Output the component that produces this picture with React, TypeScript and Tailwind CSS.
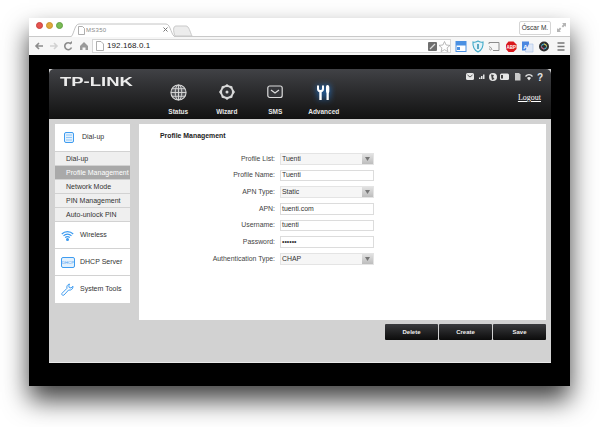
const subItems = ['Dial-up', 'Profile Management', 'Network Mode', 'PIN Management', 'Auto-unlock PIN']

const fields = [
  { label: 'Profile List:', value: 'Tuenti', select: true },
  { label: 'Profile Name:', value: 'Tuenti' },
  { label: 'APN Type:', value: 'Static', select: true },
  { label: 'APN:', value: 'tuenti.com' },
  { label: 'Username:', value: 'tuenti' },
  { label: 'Password:', value: '••••••' },
  { label: 'Authentication Type:', value: 'CHAP', select: true },
]

function TrafficLights() {
  return (
    <div className="flex gap-[3px] pl-[7px] pt-[4px]">
      <span className="h-[7px] w-[7px] rounded-full bg-[#e5544f] border border-[#c9403c]" />
      <span className="h-[7px] w-[7px] rounded-full bg-[#e0a93c] border border-[#c8922c]" />
      <span className="h-[7px] w-[7px] rounded-full bg-[#79bb55] border border-[#62a042]" />
    </div>
  )
}

function Tabstrip() {
  return (
    <div className="relative flex h-[19px] bg-white border-b border-[#c9c9c9]">
      <TrafficLights />
      {/* tab */}
      <svg className="absolute left-[41px] top-[5px]" width="135" height="14" viewBox="0 0 135 14" fill="none">
        <path d="M0 14 C4 14 4 1 9 1 H96 C101 1 101 14 106 14" fill="#fff" stroke="#c4c4c4" />
        <path d="M105 13 C103 8 103 3 106 3 H116 C119 3 120 9 122 13 Z" fill="#ececec" stroke="#c9c9c9" />
      </svg>
      <svg className="absolute left-[49px] top-[8px]" width="7" height="9" viewBox="0 0 7 9" fill="#fff" stroke="#9a9a9a" strokeWidth="0.8">
        <path d="M0.5 0.5H4.5L6.5 2.5V8.5H0.5Z" />
      </svg>
      <span className="absolute left-[57px] top-[8px] text-[6px] leading-[9px] tracking-[0.3px] text-[#8a8a8a]">MS350</span>
      <svg className="absolute left-[134px] top-[9px]" width="5" height="5" viewBox="0 0 5 5" stroke="#777" strokeWidth="1">
        <path d="M0.500 0.500L4.500 4.500M4.500 0.500L0.500 4.500" />
      </svg>
      {/* profile button */}
      <div className="absolute left-[490px] top-[3px] flex h-[14px] w-[32px] items-center justify-center whitespace-nowrap rounded-[2px] border border-[#d5d5d5] bg-white text-[6.5px] text-[#333]">
        Óscar M.
      </div>
      <svg className="absolute left-[528px] top-[5px]" width="9" height="9" viewBox="0 0 9 9" fill="#b5b5b5">
        <path d="M5 0H9V4L7.8 2.8L6 4.4L4.7 3.2L6.3 1.2Z" />
        <path d="M0 9V5L1.2 6.2L3 4.6L4.3 5.8L2.7 7.8L4 9Z" />
      </svg>
    </div>
  )
}

function Toolbar() {
  return (
    <div className="relative flex h-[18px] items-center bg-[#f6f6f6]">
      <svg className="absolute left-[5px] top-[4px]" width="60" height="10" viewBox="0 0 60 10" fill="none" strokeWidth="1.6">
        <path d="M9 5H2M5 2L2 5L5 8" stroke="#8c8c8c" />
        <path d="M16 5H23M20 2L23 5L20 8" stroke="#d2d2d2" />
        <path d="M37 3A3.5 3.5 0 1 0 37.5 6.5" stroke="#8c8c8c" />
        <path d="M35 2.6H38V0Z" fill="#8c8c8c" stroke="none" />
        <path d="M46 5L50 1L54 5V9H51.5V6.5H48.5V9H46Z" fill="#9a9a9a" stroke="none" />
      </svg>
      <div className="absolute left-[63px] top-[2px] flex h-[14px] w-[359px] items-center border border-[#d5d5d5] bg-white pl-[3px]">
        <svg width="8" height="10" viewBox="0 0 8 10" fill="#fff" stroke="#9a9a9a" strokeWidth="0.8">
          <path d="M0.5 0.5H5L7.5 3V9.5H0.5Z" />
        </svg>
        <span className="ml-[3px] text-[8px] font-medium tracking-[0.1px] text-[#222]">192.168.0.1</span>
      </div>
      <svg className="absolute left-[399px] top-[3px]" width="140" height="13" viewBox="0 0 140 13" fill="none">
        {/* pen */}
        <rect x="0" y="2" width="9" height="9" rx="1" fill="#6f6f6f" />
        <path d="M2 9L7 4" stroke="#ddd" strokeWidth="1.2" />
        {/* star */}
        <path d="M16.500 1.500L18.100 5L22 5.400L19.100 7.900L19.900 11.600L16.500 9.700L13.100 11.600L13.900 7.900L11 5.400L14.900 5Z" fill="#fff" stroke="#a8a8a8" strokeWidth="0.8" />
        {/* window ext */}
        <rect x="28" y="1.500" width="10" height="10" fill="#fff" stroke="#4a90e2" />
        <rect x="28" y="1.500" width="10" height="4" fill="#4a90e2" />
        <rect x="29" y="7" width="3" height="3" fill="#4a90e2" />
        {/* shield */}
        <path d="M45 2C47 3 49 1.500 50 1C51 1.500 53 3 55 2C55.500 7 53 10.500 50 12C47 10.500 44.500 7 45 2Z" fill="#e3f3f8" stroke="#3fa9c9" strokeWidth="1.100" />
        <path d="M50 4V9" stroke="#2e8fb0" strokeWidth="1.500" />
        {/* cast */}
        <path d="M61 4V2.500H71V10.500H65" stroke="#8c8c8c" />
        <path d="M61 6.500A4 4 0 0 1 64 10M61 8.700A2 2 0 0 1 62.500 10.500" stroke="#8c8c8c" strokeWidth="0.8" />
        {/* abp */}
        <path d="M80.500 1.500H85.500L88.500 4.500V9L85.500 12H80.500L78 9V4.500Z" fill="#d9171b" />
        <text x="83.300" y="8.500" fontSize="4.500" fontWeight="700" fill="#fff" textAnchor="middle" fontFamily="Liberation Sans">ABP</text>
        {/* translate */}
        <rect x="94" y="1.500" width="7" height="9" fill="#4a86e0" />
        <path d="M101 4H105V12H97.500V10.500" fill="#dfe8f7" stroke="#a9c0e6" strokeWidth="0.6" />
        <text x="97.500" y="8.500" fontSize="6" fontWeight="700" fill="#fff" textAnchor="middle" fontFamily="Liberation Sans">A</text>
        {/* color wheel */}
        <circle cx="116" cy="6.500" r="5" fill="#2f2f2f" />
        <circle cx="116" cy="6.500" r="2.500" fill="none" stroke="#46b5d8" strokeWidth="1" />
        <path d="M116 4A2.500 2.500 0 0 1 118.500 6.500" stroke="#e8c53a" strokeWidth="1" />
        <path d="M116 9A2.500 2.500 0 0 1 113.500 6.500" stroke="#d9486a" strokeWidth="1" />
        {/* menu */}
        <path d="M129.500 3H136.500M129.500 6.500H136.500M129.500 10H136.500" stroke="#777" strokeWidth="1.500" />
      </svg>
    </div>
  )
}

function NavIcon({ name }: { name: string }) {
  if (name === 'Status') {
    return (
      <svg width="17" height="17" viewBox="0 0 18 18" fill="none" stroke="#d8d8d8" strokeWidth="1">
        <circle cx="9" cy="9" r="8" fill="#55575b" strokeWidth="1.200" />
        <ellipse cx="9" cy="9" rx="3.500" ry="8" />
        <path d="M9 1V17M1 9H17M2 5H16M2 13H16" />
      </svg>
    )
  }
  if (name === 'Wizard') {
    return (
      <svg width="18" height="18" viewBox="0 0 18 18" fill="none">
        <path d="M9 1L11 2.600L14.200 3.200L15 6L17 9L15 12L14.200 14.800L11 15.400L9 17L7 15.400L3.800 14.800L3 12L1 9L3 6L3.800 3.200L7 2.600Z" fill="#d8d8d8" />
        <circle cx="9" cy="9" r="5" fill="#333437" />
        <circle cx="9" cy="9" r="1.500" fill="#d8d8d8" />
      </svg>
    )
  }
  if (name === 'SMS') {
    return (
      <svg width="16" height="14" viewBox="0 0 16 14" fill="none" stroke="#dcdcdc" strokeWidth="1.200">
        <rect x="0.800" y="1" width="14.400" height="11.500" rx="2" fill="#35363a" />
        <path d="M4 5L8 8L12 5" />
      </svg>
    )
  }
  return (
    <svg width="13" height="15" viewBox="0 0 13 15" className="drop-shadow-[0_0_3px_#1f8cff]">
      <path d="M0 0.500H2V3.500C2 4.500 2.700 5 3.500 5C4.300 5 5 4.500 5 3.500V0.500H7V4C7 5.800 6 6.800 4.700 7.200V15H2.300V7.200C1 6.800 0 5.800 0 4Z" fill="#fff" />
      <path d="M10.500 0C9.300 0 9 1 9 2.500V6C9 7.200 9.500 7.800 9.500 8.500V15H11.800V8.500C11.800 7.800 12.300 7.200 12.300 6V2.500C12.300 1 11.700 0 10.500 0Z" fill="#fff" />
    </svg>
  )
}

function StatusIcons() {
  return (
    <svg width="78" height="10" viewBox="0 0 78 10" fill="#e6e6e6">
      <rect x="0" y="1" width="8" height="7" rx="1.500" />
      <path d="M1.500 3L4 5L6.500 3" stroke="#333" fill="none" strokeWidth="0.8" />
      <path d="M13 7H14.500V5.500H13ZM15 7H16.500V4H15ZM17 7H18.500V2.500H17Z" />
      <circle cx="27" cy="5" r="4" />
      <path d="M25 2.500L28 3L27 5L28.500 7L26 8L25.500 5.500Z" fill="#444" />
      <rect x="34" y="1.500" width="9" height="6.500" rx="1.500" />
      <rect x="35" y="3" width="2" height="3.500" fill="#444" />
      <path d="M49 1H53L54.500 2.500V8.500H49Z" fill="#c9c9c9" />
      <path d="M59 4A5 5 0 0 1 67 4L66 5A3.500 3.500 0 0 0 60 5ZM61 6A2.500 2.500 0 0 1 65 6L63 8.500Z" />
      <text x="71" y="8.500" fontSize="10" fontWeight="700" fontFamily="Liberation Sans">?</text>
    </svg>
  )
}

function Header() {
  return (
    <div className="relative flex h-[50px] rounded-t-[5px] border-b border-[#111] bg-gradient-to-b from-[#414246] to-[#131313]">
      <div className="pl-[11px] pt-[6px] text-[13px] font-bold leading-[14px] text-[#ececec]">
        <span className="inline-block origin-left scale-x-[1.42]">TP-LINK</span>
      </div>
      <div className="absolute left-[105px] top-[14px] flex">
        {['Status', 'Wizard', 'SMS', 'Advanced'].map((name) => (
          <div key={name} className="flex w-[48.500px] flex-col items-center">
            <div className="flex h-[18px] items-center">
              <NavIcon name={name} />
            </div>
            <span className="mt-[7px] text-[6.500px] font-bold leading-[8px] text-[#e8e8e8]">{name}</span>
          </div>
        ))}
      </div>
      <div className="absolute right-[7px] top-[3px]">
        <StatusIcons />
      </div>
      <span className="absolute right-[10px] top-[24px] font-['Liberation_Serif',serif] text-[8px] leading-[10px] text-white underline">
        Logout
      </span>
    </div>
  )
}

function SideHead({ label, children }: { label: string; children: React.ReactNode }) {
  return (
    <div className="flex h-[26px] items-center bg-white text-[7px] text-[#333]">
      <div className="flex w-[25px] justify-center">{children}</div>
      {label}
    </div>
  )
}

function Sidebar() {
  return (
    <div className="flex w-[75px] flex-col gap-px self-start bg-[#d2d2d2]">
      <div className="flex h-[27px] items-center bg-white text-[7px] text-[#333]">
        <div className="flex w-[27px] justify-center pl-[1px]">
          <svg width="10" height="11" viewBox="0 0 10 11" fill="none">
            <rect x="0.500" y="0.500" width="9" height="10" rx="1.500" stroke="#3f9cf0" fill="#e3f1fd" />
            <path d="M2.500 3H7.500M2.500 5.500H7.500M2.500 8H7.500" stroke="#3f9cf0" strokeDasharray="1 1" />
          </svg>
        </div>
        Dial-up
      </div>
      {subItems.map((item) => (
        <div
          key={item}
          className={`flex h-[13px] items-center whitespace-nowrap pl-[11px] pt-px text-[7px] ${
            item === 'Profile Management' ? 'bg-[#a9a9a9] text-white' : 'bg-[#efefef] text-[#333]'
          }`}
        >
          {item}
        </div>
      ))}
      <SideHead label="Wireless">
        <svg width="13" height="11" viewBox="0 0 13 11" fill="none" stroke="#3f9cf0" strokeWidth="1.200">
          <path d="M0.800 4A8 8 0 0 1 12.200 4M2.500 5.800A5.500 5.500 0 0 1 10.500 5.800M4.200 7.600A3 3 0 0 1 8.800 7.600" />
          <circle cx="6.500" cy="9.500" r="0.900" fill="#3f9cf0" />
        </svg>
      </SideHead>
      <SideHead label="DHCP Server">
        <svg width="14" height="11" viewBox="0 0 14 11" fill="#e3f1fd" stroke="#3f9cf0">
          <rect x="0.500" y="0.500" width="13" height="10" rx="1.500" />
          <text x="7" y="7.200" fontSize="4.200" textAnchor="middle" fill="#3f9cf0" stroke="none" fontFamily="Liberation Sans">DHCP</text>
        </svg>
      </SideHead>
      <div className="flex h-[27px] items-center bg-white text-[7px] text-[#333]">
        <div className="flex w-[25px] justify-center">
          <svg width="13" height="13" viewBox="0 0 13 13" fill="none" stroke="#3f9cf0" strokeWidth="1">
            <path d="M8.500 1A3.300 3.300 0 0 0 6 5.300L1 10.300C0.500 11 0.800 11.700 1.300 12.100C1.800 12.500 2.500 12.400 3 12L7.600 7C9.800 7.700 12.300 6 12 3.200L10 5L8.200 4.500L7.800 2.800Z" />
          </svg>
        </div>
        System Tools
      </div>
    </div>
  )
}

function Field({ value, select }: { value: string; select?: boolean }) {
  return (
    <div
      className={`flex h-[11.670px] w-[94px] items-center justify-between pl-[1px] text-[6.900px] text-[#333] ${
        select ? 'border border-[#e4e4e4] bg-[#f6f6f6]' : 'border border-[#dcdcdc] bg-white'
      }`}
    >
      {value}
      {select && (
        <span className="flex h-full w-[11px] items-center justify-center bg-gradient-to-b from-[#e2e2e2] to-[#bdbdbd]">
          <svg width="5" height="4" viewBox="0 0 5 4" fill="#777">
            <path d="M0 0H5L2.500 4Z" />
          </svg>
        </span>
      )}
    </div>
  )
}

function ProfileForm() {
  return (
    <div className="h-[196px] w-[407px] bg-white pl-[21px] pt-[7px] text-[6.900px] text-[#444]">
      <div className="text-[6.900px] font-bold leading-[9px] text-[#222]">Profile Management</div>
      <div className="ml-[-21px] mt-[13px] grid grid-cols-[136px_94px] auto-rows-[11.670px] items-center gap-x-[5px] gap-y-[5px]">
        {fields.map((f) => (
          <div key={f.label} className="contents">
            <span className="text-right">{f.label}</span>
            <Field value={f.value} select={f.select} />
          </div>
        ))}
      </div>
    </div>
  )
}

function Actions() {
  return (
    <div className="mt-[4px] flex justify-end gap-px">
      {['Delete', 'Create', 'Save'].map((b) => (
        <button
          key={b}
          className="flex h-[16px] w-[53px] items-center justify-center rounded-[1px] bg-gradient-to-b from-[#3b3c3f] to-[#0c0c0c] text-[6px] font-bold text-[#eee]"
        >
          {b}
        </button>
      ))}
    </div>
  )
}

export default function App() {
  return (
    <div className="h-[427px] w-[600px] overflow-hidden bg-white pl-[29px] pt-[18px] font-['Liberation_Sans',Arial,sans-serif]">
      <div className="flex h-[368px] w-[541px] flex-col shadow-[0_14px_24px_rgba(0,0,0,0.75)]">
        <Tabstrip />
        <Toolbar />
        <div className="flex-1 bg-black pl-[20px] pt-[14px]">
          <div className="flex h-[294px] w-[502px] flex-col bg-[#d2d2d2]">
            <Header />
            <div className="flex flex-1 gap-[9px] border-b border-[#eaeaea] pl-[6px] pt-[5px]">
              <Sidebar />
              <div>
                <ProfileForm />
                <Actions />
              </div>
            </div>
          </div>
        </div>
      </div>
    </div>
  )
}
